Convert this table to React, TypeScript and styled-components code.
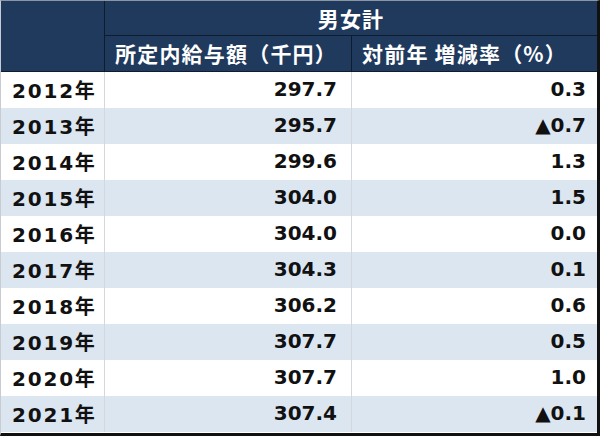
import React from 'react'
import styled, { createGlobalStyle } from 'styled-components'

type Row = {
  year: string
  amount: string
  rate: string
}

const ROWS: Row[] = [
  { year: '2012年', amount: '297.7', rate: '0.3' },
  { year: '2013年', amount: '295.7', rate: '▲0.7' },
  { year: '2014年', amount: '299.6', rate: '1.3' },
  { year: '2015年', amount: '304.0', rate: '1.5' },
  { year: '2016年', amount: '304.0', rate: '0.0' },
  { year: '2017年', amount: '304.3', rate: '0.1' },
  { year: '2018年', amount: '306.2', rate: '0.6' },
  { year: '2019年', amount: '307.7', rate: '0.5' },
  { year: '2020年', amount: '307.7', rate: '1.0' },
  { year: '2021年', amount: '307.4', rate: '▲0.1' },
]

const NAVY = '#1f3a5d'
const NAVY_LINE = '#0e1c2e'
const STRIPE = '#dce6f1'

const GlobalStyle = createGlobalStyle`
  html, body {
    margin: 0;
    padding: 0;
    background: #ffffff;
  }
  body {
    font-family: "DejaVu Sans", "Noto Sans CJK JP", sans-serif;
    font-weight: bold;
  }
`

const Frame = styled.div`
  width: 600px;
  height: 436px;
  box-sizing: border-box;
  border-top: 1px solid #8c96a3;
  border-left: 1px solid #c8ccd2;
  border-right: 3px solid #111;
  border-bottom: 3px solid #111;
  display: grid;
  grid-template-columns: 104px 247px 1fr;
  grid-template-rows: 35px 36px repeat(10, 36px);
  overflow: hidden;
`

const HeadCell = styled.div<{ $span?: boolean; $rows?: boolean; $center?: boolean; $last?: boolean }>`
  background: ${NAVY};
  color: #ffffff;
  font-family: "Noto Sans CJK JP", sans-serif;
  font-weight: bold;
  font-size: 21px;
  letter-spacing: 1.2px;
  display: flex;
  align-items: center;
  justify-content: ${p => (p.$center ? 'center' : 'flex-start')};
  padding-left: ${p => (p.$center ? '0' : '10px')};
  padding-bottom: 1px;
  box-sizing: border-box;
  grid-column: ${p => (p.$span ? 'span 2' : 'auto')};
  grid-row: ${p => (p.$rows ? 'span 2' : 'auto')};
  border-right: ${p => (p.$last ? 'none' : `1px solid ${NAVY_LINE}`)};
  border-bottom: 1px solid ${NAVY_LINE};
`

const YearCell = styled.div<{ $stripe: boolean }>`
  background: ${p => (p.$stripe ? STRIPE : '#ffffff')};
  color: #111;
  font-size: 20px;
  letter-spacing: 1.8px;
  display: flex;
  align-items: center;
  padding-left: 11px;
  padding-bottom: 2px;
  box-sizing: border-box;
  border-right: 1px solid #d4d7db;
`

const NumCell = styled.div<{ $stripe: boolean; $last?: boolean }>`
  background: ${p => (p.$stripe ? STRIPE : '#ffffff')};
  color: #111;
  font-size: 20px;
  display: flex;
  align-items: center;
  justify-content: flex-end;
  padding-right: ${p => (p.$last ? '11px' : '14px')};
  padding-bottom: 2px;
  box-sizing: border-box;
  border-right: ${p => (p.$last ? 'none' : '1px solid #d4d7db')};
`

const App = () => (
  <>
    <GlobalStyle />
    <Frame>
      <HeadCell $rows />
      <HeadCell $span $center $last>男女計</HeadCell>
      <HeadCell>所定内給与額（千円）</HeadCell>
      <HeadCell $last>対前年 増減率（%）</HeadCell>
      {ROWS.map((row, i) => (
        <React.Fragment key={row.year}>
          <YearCell $stripe={i % 2 === 1}>{row.year}</YearCell>
          <NumCell $stripe={i % 2 === 1}>{row.amount}</NumCell>
          <NumCell $stripe={i % 2 === 1} $last>{row.rate}</NumCell>
        </React.Fragment>
      ))}
    </Frame>
  </>
)

export default App
